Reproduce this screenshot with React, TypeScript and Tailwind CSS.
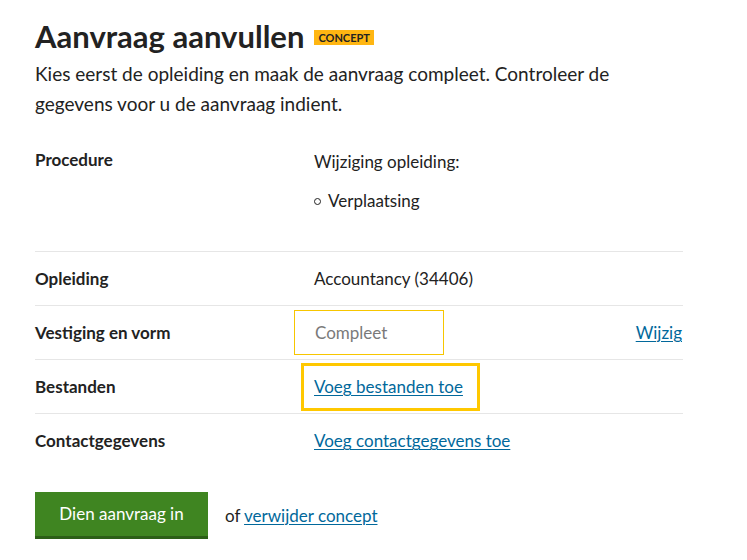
import React from "react";

const linkCls = "text-[#01689b] underline underline-offset-2 decoration-1";

const Row = ({ label, children, right, last }: { label: string; children: React.ReactNode; right?: React.ReactNode; last?: boolean }) => (
  <div className={`flex items-center h-[54px] ${last ? "" : "border-b border-[#e6e6e6]"}`}>
    <div className="w-[279px] shrink-0 font-bold text-[#222]">{label}</div>
    <div className="flex-1 flex items-center">{children}</div>
    {right}
  </div>
);

export default function App() {
  return (
    <div className="min-h-[560px] bg-white px-[35px] pt-[14px] text-[#222] text-[17px]" style={{ fontFamily: '"Lato", "Liberation Sans", sans-serif' }}>
      <div className="flex items-center gap-[10px]">
        <h1 className="text-[31px] font-bold leading-[44px] text-[#222]">Aanvraag aanvullen</h1>
        <span className="bg-[#ffb612] px-[4px] text-[11px] font-bold leading-[15px] mt-[3px]">CONCEPT</span>
      </div>
      <p className="text-[19px] leading-[30px] mt-[1px] w-[620px]">
        Kies eerst de opleiding en maak de aanvraag compleet. Controleer de gegevens voor u de aanvraag indient.
      </p>

      <div className="w-[648px] mt-[17px]">
        <div className="flex border-b border-[#e6e6e6] h-[116px] pt-[12px]">
          <div className="w-[279px] shrink-0 font-bold leading-[24px]">Procedure</div>
          <div className="flex-1">
            <div className="leading-[24px] mt-[2px]">Wijziging opleiding:</div>
            <ul className="mt-[15px] flex items-center gap-[7px] leading-[24px]">
              <span className="w-[7px] h-[7px] rounded-full border border-[#222]" />
              <li>Verplaatsing</li>
            </ul>
          </div>
        </div>
        <Row label="Opleiding">
          <span>Accountancy (34406)</span>
        </Row>
        <Row label="Vestiging en vorm" right={<a href="#" className={`${linkCls} mr-[1px]`}>Wijzig</a>}>
          <div className="-ml-[20px] w-[150px] h-[45px] border border-[#f7c600] pl-[20px] flex items-center text-[#7a7a7a]">Compleet</div>
        </Row>
        <Row label="Bestanden">
          <div className="-ml-[13px] w-[179px] h-[48px] border-[3px] border-[#ffc800] pl-[10px] flex items-center">
            <a href="#" className={linkCls}>Voeg bestanden toe</a>
          </div>
        </Row>
        <Row label="Contactgegevens" last>
          <a href="#" className={linkCls}>Voeg contactgegevens toe</a>
        </Row>
      </div>

      <div className="flex items-center mt-[24px] gap-[17px]">
        <button className="w-[173px] h-[47px] bg-[#3f8521] border-b-[3px] border-[#2c5f17] text-white text-[17px]">Dien aanvraag in</button>
        <span>of <a href="#" className={linkCls}>verwijder concept</a></span>
      </div>
    </div>
  );
}
